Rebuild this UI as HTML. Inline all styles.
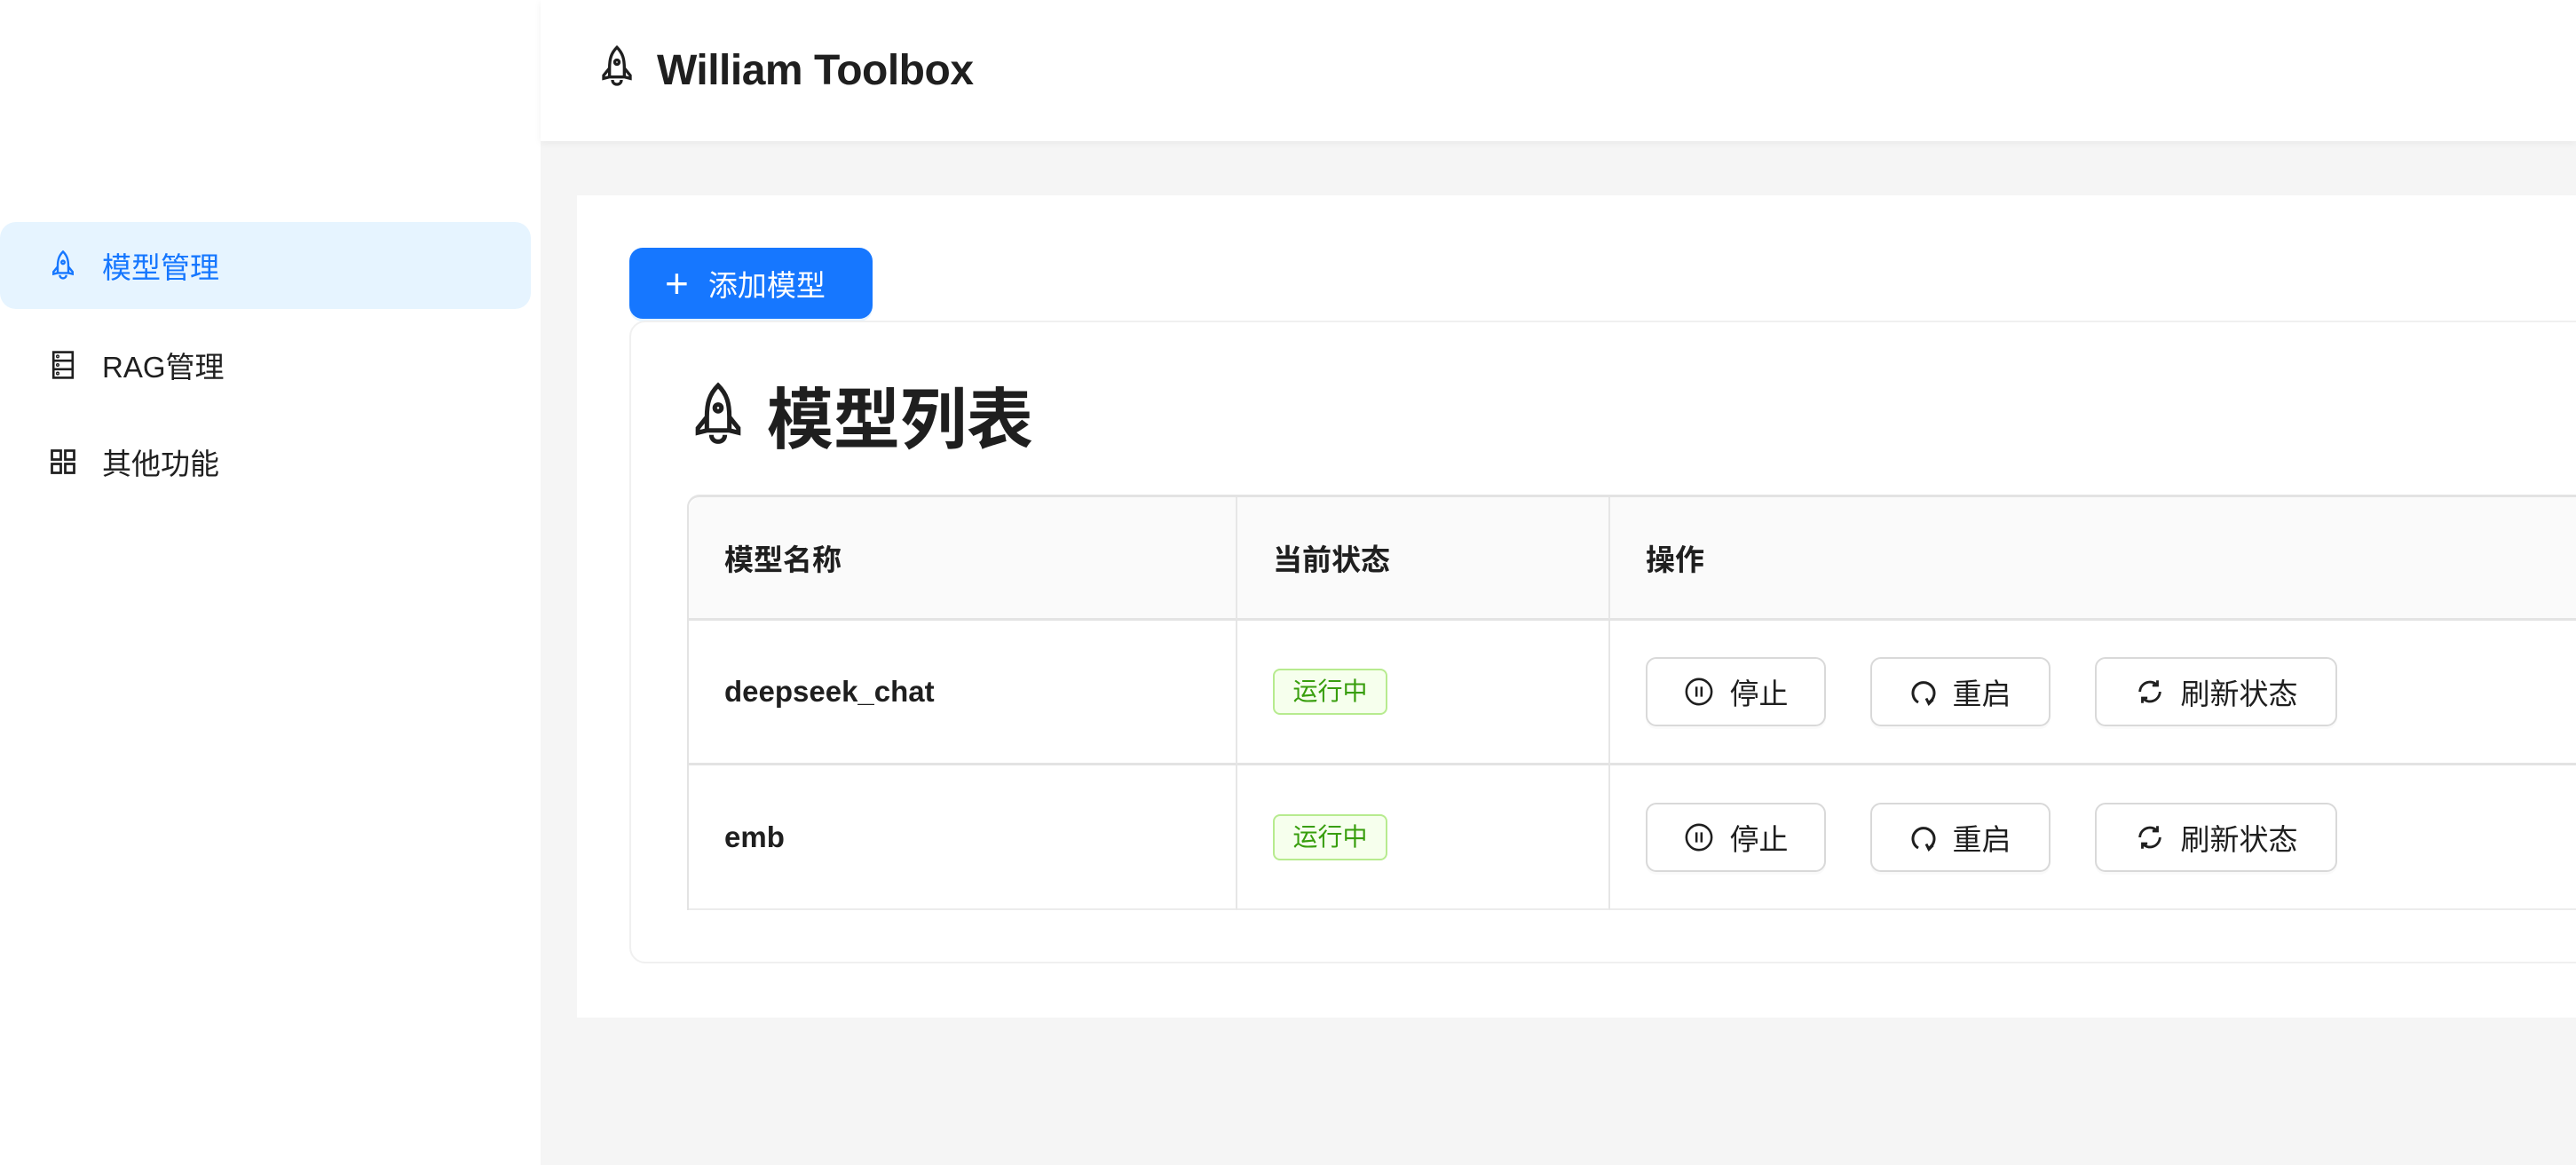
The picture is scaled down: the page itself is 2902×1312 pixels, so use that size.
<!DOCTYPE html>
<html><head><meta charset="utf-8"><style>
*{box-sizing:border-box;margin:0;padding:0}
body{width:2902px;height:1312px;overflow:hidden;background:#f5f5f5;font-family:"Liberation Sans","Noto Sans CJK SC",sans-serif;color:#1f1f1f;position:relative}
.side{position:absolute;left:0;top:0;width:609px;height:1312px;background:#fff}
.hdr{position:absolute;left:609px;top:0;right:0;height:159px;background:#fff;box-shadow:0 2px 8px rgba(0,0,0,.06)}
.mi{position:absolute;left:0;width:598px;height:98px;border-radius:18px;display:flex;align-items:center;font-size:33px}
.mi svg{position:absolute;left:56px}
.mi span{position:absolute;left:115px}
.card{position:absolute;left:650px;top:220px;right:0;height:926px;background:#fff}
.btn-add{position:absolute;left:709px;top:279px;width:274px;height:80px;background:#1677ff;border-radius:15px;color:#fff;font-size:33px;display:flex;align-items:center;padding-left:40px;gap:22px;box-shadow:0 3px 0 rgba(5,145,255,.1)}
.inner{position:absolute;left:709px;top:361px;right:-20px;height:724px;border:2px solid #f0f0f0;border-radius:18px;background:#fff}
.title{position:absolute;left:777px;top:412px;display:flex;align-items:center;font-size:75px;font-weight:bold}
table{position:absolute;left:774px;top:557px;border-collapse:separate;border-spacing:0;width:2200px;font-size:33px;border-top:3px solid #e3e3e3;border-left:2px solid #e3e3e3;border-top-left-radius:14px}
td,th{border-right:2px solid #e6e6e6;border-bottom:3px solid #e3e3e3;text-align:left;padding-left:40px}
th:first-child{border-top-left-radius:14px}
th{background:#fafafa;height:139px;font-weight:bold}
td{height:163px;font-weight:bold}
tr:last-child td{border-bottom:2px solid #ececec}
.tag{display:inline-block;width:129px;height:52px;border:2px solid #b7eb8f;background:#f6ffed;color:#389e0d;border-radius:8px;font-size:28px;font-weight:normal;text-align:center;line-height:48px}
.b{display:inline-flex;align-items:center;justify-content:center;gap:18px;height:78px;border:2px solid #d9d9d9;border-radius:12px;font-weight:normal;margin-right:50px;box-shadow:0 3px 0 rgba(0,0,0,.02);vertical-align:middle}
</style></head><body>
<div class="side">
 <div class="mi" style="top:250px;background:#e6f4ff;color:#1677ff"><svg width="30" height="36" viewBox="0 0 24 30" fill="none" stroke="#1677ff" stroke-width="2"><path d="M12 2 C8 6 7 10 7 16 L7 22 L17 22 L17 16 C17 10 16 6 12 2Z M7 16 L3 21 L3 23 L7 22 M17 16 L21 21 L21 23 L17 22 M9 24 C9 28 15 28 15 24"/><circle cx="12" cy="12" r="1.5"/></svg><span>模型管理</span></div>
 <div class="mi" style="top:362px"><svg width="30" height="36" viewBox="0 0 24 30" fill="none" stroke="#1f1f1f" stroke-width="2.2"><rect x="3" y="3" width="18" height="24"/><path d="M3 11H21M3 19H21"/><circle cx="7" cy="7" r=".6"/><circle cx="7" cy="15" r=".6"/><circle cx="7" cy="23" r=".6"/></svg><span>RAG管理</span></div>
 <div class="mi" style="top:471px"><svg width="30" height="30" viewBox="0 0 24 24" fill="none" stroke="#1f1f1f" stroke-width="2.2"><rect x="2" y="2" width="8" height="8"/><rect x="14" y="2" width="8" height="8"/><rect x="2" y="14" width="8" height="8"/><rect x="14" y="14" width="8" height="8"/></svg><span>其他功能</span></div>
</div>
<div class="hdr">
 <svg style="position:absolute;left:65px;top:50px" width="42" height="50" viewBox="0 0 24 30" fill="none" stroke="#1f1f1f" stroke-width="2"><path d="M12 2 C8 6 7 10 7 16 L7 22 L17 22 L17 16 C17 10 16 6 12 2Z M7 16 L3 21 L3 23 L7 22 M17 16 L21 21 L21 23 L17 22 M9 24 C9 28 15 28 15 24"/><circle cx="12" cy="12" r="1.5"/></svg>
 <div style="position:absolute;left:131px;top:52px;font-size:48px;font-weight:bold;color:#1f1f1f;letter-spacing:-0.5px">William Toolbox</div>
</div>
<div class="card"></div>
<div class="btn-add"><span style="font-size:46px;font-weight:200;line-height:1">+</span><span>添加模型</span></div>
<div class="inner"></div>
<div class="title"><svg width="64" height="76" viewBox="0 0 24 30" fill="none" stroke="#1f1f1f" stroke-width="2"><path d="M12 2 C8 6 7 10 7 16 L7 22 L17 22 L17 16 C17 10 16 6 12 2Z M7 16 L3 21 L3 23 L7 22 M17 16 L21 21 L21 23 L17 22 M9 24 C9 28 15 28 15 24"/><circle cx="12" cy="12" r="1.5"/></svg><span style="margin-left:23px">模型列表</span></div>
<table>
<tr><th style="width:618px">模型名称</th><th style="width:420px">当前状态</th><th>操作</th></tr>
<tr><td>deepseek_chat</td><td><span class="tag">运行中</span></td><td>
<span class="b" style="width:203px"><svg width="34" height="34" viewBox="0 0 24 24" fill="none" stroke="#1f1f1f" stroke-width="1.8"><circle cx="12" cy="12" r="10"/><path d="M10 8V16M14 8V16"/></svg>停止</span><span class="b" style="width:203px"><svg width="30" height="36" viewBox="0 0 20 24" fill="none" stroke="#1f1f1f" stroke-width="2"><path d="M6 20A8 8 0 1 1 14 20"/><path d="M12 17L14 21L17 18"/></svg>重启</span><span class="b" style="width:273px"><svg width="34" height="34" viewBox="0 0 24 24" fill="none" stroke="#1f1f1f" stroke-width="2"><path d="M4 12A8 8 0 0 1 18 7M20 12A8 8 0 0 1 6 17"/><path d="M18 3V7H14M6 21V17H10"/></svg>刷新状态</span></td></tr>
<tr><td>emb</td><td><span class="tag">运行中</span></td><td>
<span class="b" style="width:203px"><svg width="34" height="34" viewBox="0 0 24 24" fill="none" stroke="#1f1f1f" stroke-width="1.8"><circle cx="12" cy="12" r="10"/><path d="M10 8V16M14 8V16"/></svg>停止</span><span class="b" style="width:203px"><svg width="30" height="36" viewBox="0 0 20 24" fill="none" stroke="#1f1f1f" stroke-width="2"><path d="M6 20A8 8 0 1 1 14 20"/><path d="M12 17L14 21L17 18"/></svg>重启</span><span class="b" style="width:273px"><svg width="34" height="34" viewBox="0 0 24 24" fill="none" stroke="#1f1f1f" stroke-width="2"><path d="M4 12A8 8 0 0 1 18 7M20 12A8 8 0 0 1 6 17"/><path d="M18 3V7H14M6 21V17H10"/></svg>刷新状态</span></td></tr>
</table>
</body></html>
